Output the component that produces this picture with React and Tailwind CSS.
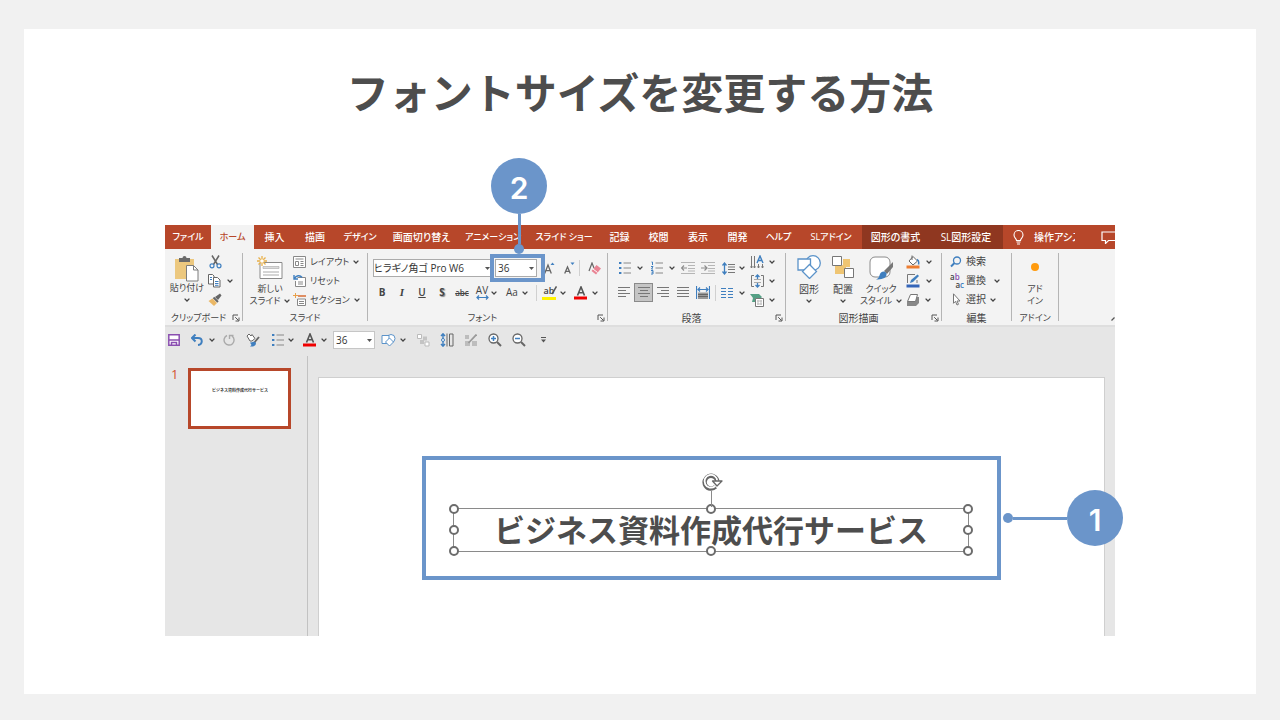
import React, { useState } from 'react';
import clsx from 'clsx';

const TABS = [
    { label: 'ファイル', width: 'w-[46px]', text: 'text-[9px]' },
    { label: 'ホーム', width: 'w-[43px]', text: 'text-[9px]' },
    { label: '挿入', width: 'w-[41px]', text: 'text-[10px]' },
    { label: '描画', width: 'w-[40px]', text: 'text-[10px]' },
    { label: 'デザイン', width: 'w-[50px]', text: 'text-[9px]' },
    { label: '画面切り替え', width: 'w-[73px]', text: 'text-[10px]' },
    { label: 'アニメーション', width: 'w-[70px]', text: 'text-[9px]' },
    { label: 'スライド ショー', width: 'w-[72px]', text: 'text-[9px]' },
    { label: '記録', width: 'w-[39px]', text: 'text-[10px]' },
    { label: '校閲', width: 'w-[39px]', text: 'text-[10px]' },
    { label: '表示', width: 'w-[40px]', text: 'text-[10px]' },
    { label: '開発', width: 'w-[39px]', text: 'text-[10px]' },
    { label: 'ヘルプ', width: 'w-[43px]', text: 'text-[9px]' },
    { label: 'SLアドイン', width: 'w-[62px]', text: 'text-[9px]' },
    { label: '図形の書式', width: 'w-[67px]', text: 'text-[10px]', context: true },
    { label: 'SL図形設定', width: 'w-[74px]', text: 'text-[10px]', context: true },
];

const BLUE = '#3f7fbf';
const GRAY = '#666666';

function Icon({ w = 14, h = 14, children, label }) {
    return (
        <svg width={w} height={h} viewBox={`0 0 ${w} ${h}`} fill="none" className="shrink-0" aria-label={label}>
            {children}
        </svg>
    );
}

function Chevron() {
    return (
        <Icon w={6} h={4}>
            <path d="M.6.6 3 3 5.4.6" stroke="#444" strokeWidth="1.3" />
        </Icon>
    );
}

function Triangle() {
    return (
        <Icon w={5} h={3}>
            <path d="M0 0h5L2.5 3z" fill="#555" />
        </Icon>
    );
}

function Tool({ label, className, children }) {
    return (
        <button type="button" aria-label={label} className={clsx('flex h-[19px] shrink-0 items-center justify-center', className)}>
            {children}
        </button>
    );
}

function Divider() {
    return <div className="h-4 w-px shrink-0 bg-[#d0d0d0]" />;
}

function Group({ label, className, labelSize = 'text-[10px]', launcher, children }) {
    return (
        <section className={clsx('flex shrink-0 pt-[3px]', className)}>
            <div className="flex min-w-0 flex-1 flex-col pb-px">
                <div className="flex flex-1">{children}</div>
                <div className="flex h-3 items-center">
                    <span className={clsx('flex-1 whitespace-nowrap text-center', labelSize)}>{label}</span>
                    {launcher && (
                        <button type="button" aria-label={`${label}の詳細`} className="mr-0.5 flex w-2">
                            <Icon w={8} h={8}>
                                <path d="M1 6V1h5M3.2 3.2 6.5 6.5M7 3.5V7H3.5" stroke="#555" />
                            </Icon>
                        </button>
                    )}
                </div>
            </div>
            <div className="mb-1 mt-px w-px bg-[#b5b5b5]" />
        </section>
    );
}

function BulletsIcon() {
    return (
        <Icon w={12} h={14}>
            <path d="M0 2h2.4M0 7h2.4M0 12h2.4" stroke={BLUE} strokeWidth="2.2" />
            <path d="M4.5 2H12M4.5 7H12M4.5 12H12" stroke="#888" />
        </Icon>
    );
}

function NumbersIcon() {
    return (
        <Icon w={12} h={14}>
            <path d="M.5 1h1v3M0 5.5h2L.5 8H2M0 9.5h2v3.5H0M.5 11.2H2" stroke={BLUE} />
            <path d="M4.5 2H12M4.5 7H12M4.5 12H12" stroke="#888" />
        </Icon>
    );
}

function LinesIcon({ d }) {
    return (
        <Icon w={12} h={11}>
            <path d={d} stroke="#777" />
        </Icon>
    );
}

function IndentIcon({ flip }) {
    return (
        <Icon w={14} h={12}>
            <path d="M0 .5h14M7 3.5h7M7 6.5h7M0 11.5h14M7 9h7" stroke="#b5b5b5" />
            <path d={flip ? 'M0 6h5.5M3.5 3.5 6 6 3.5 8.5' : 'M.5 6H6M3 3.5.5 6 3 8.5'} stroke="#8d8d8d" strokeWidth="1.2" />
        </Icon>
    );
}

function FontColorIcon() {
    return (
        <Icon w={14} h={14}>
            <path d="M3.5 9.5 7 1l3.5 8.5M4.8 6.8h4.4" stroke="#555" strokeWidth="1.6" />
            <rect y="10.5" width="13" height="3" fill="#f00000" />
        </Icon>
    );
}

function ShapesIcon({ size = 24 }) {
    return (
        <svg width={size} height={size} viewBox="0 0 24 24" fill="#fff" stroke="#5b93c9" strokeWidth="1.3" className="shrink-0">
            <circle cx="16" cy="8" r="7.3" />
            <path d="M1 4h12.500v11H1z" />
            <path d="m12.500 9.500 7 7-7 7-7-7z" />
        </svg>
    );
}

function QuickBrushIcon() {
    return (
        <Icon w={26} h={26}>
            <rect x="2" y="2" width="20" height="20" rx="5" fill="#fff" stroke="#8a8a8a" />
            <path d="M25 7v5l-6 7-3-3z" fill="#777" />
            <path d="M15.500 16.500c2 0 3.500 1.500 3 3.500-.8 3.500-5 4.500-10.500 4.500 3-1 3-3 4-5.500.6-1.500 2-2.500 3.500-2.500z" fill={BLUE} />
        </Icon>
    );
}

function Badge({ children }) {
    return (
        <span className="flex size-14 shrink-0 items-center justify-center rounded-full bg-[#6b95ca] pt-1 font-['Inter',sans-serif] text-[30px] font-semibold leading-none text-white">
            {children}
        </span>
    );
}

function TabBar({ active, onSelect }) {
    return (
        <nav className="flex h-6 overflow-hidden bg-[#b7472a] text-white">
            {TABS.map((tab) => (
                <button
                    key={tab.label}
                    type="button"
                    onClick={() => onSelect(tab.label)}
                    className={clsx(
                        'shrink-0 whitespace-nowrap text-center font-medium',
                        tab.width,
                        tab.text,
                        tab.context && 'bg-[#8f3720]',
                        active === tab.label && 'bg-[#f3f3f3] text-[#b7472a]'
                    )}
                >
                    {tab.label}
                </button>
            ))}
            <button type="button" className="ml-2.5 flex w-[62px] shrink-0 items-center gap-2.5 overflow-hidden whitespace-nowrap text-[10px] font-medium">
                <Icon w={11} h={15}>
                    <path d="M3.500 10.500C3.500 8.500 1 8 1 5a4.500 4.500 0 0 1 9 0c0 3-2.500 3.500-2.500 5.500zM3.500 12h4M4 14h3" stroke="#fff" strokeWidth="1.100" />
                </Icon>
                操作アシスト
            </button>
            <button type="button" aria-label="コメント" className="-mr-1 ml-auto flex shrink-0 items-center">
                <Icon w={18} h={13}>
                    <path d="M1 1h16v8.500H7.500L4.500 12.500V9.500H1z" stroke="#fff" strokeWidth="1.200" />
                </Icon>
            </button>
        </nav>
    );
}

function ClipboardGroup() {
    return (
        <Group label="クリップボード" labelSize="text-[9px]" launcher className="w-[78px]">
            <button type="button" className="ml-1 flex w-9 flex-col items-center pt-[3px]">
                <Icon w={26} h={27}>
                    <path d="M1 4h19v20H1z" fill="#ecc87f" />
                    <path d="M5 3h3.500a2 2 0 0 1 4 0H16v4H5z" fill="#6a6a6a" />
                    <path d="M12.500 10.500h7l4.500 4.500v11H12.500z" fill="#fff" stroke="#7d7d7d" />
                    <path d="M19.500 10.500V15H24" stroke="#7d7d7d" />
                </Icon>
                <span className="whitespace-nowrap text-[9px] leading-3">貼り付け</span>
                <span className="pt-1"><Chevron /></span>
            </button>
            <div className="ml-0.5 flex flex-col items-start">
                <Tool label="切り取り" className="w-4">
                    <Icon w={13} h={14}>
                        <path d="m3 .5 5.500 9M10 .5 4.500 9.500" stroke="#666" strokeWidth="1.500" />
                        <circle cx="3" cy="10.800" r="2" stroke={BLUE} strokeWidth="1.200" />
                        <circle cx="10" cy="10.800" r="2" stroke={BLUE} strokeWidth="1.200" />
                    </Icon>
                </Tool>
                <Tool label="コピー" className="gap-1.5">
                    <Icon>
                        <path d="M1.500.5h4L7 2v8H1.500z" fill="#fff" stroke="#666" />
                        <path d="M6.500 3.500h4L13 6v7H6.500z" fill="#fff" stroke="#666" />
                        <path d="M8 7.500h3.500M8 9.500h3.500M8 11.300h3.500M3 3.500h2M3 5.500h2" stroke={BLUE} />
                    </Icon>
                    <Chevron />
                </Tool>
                <Tool label="書式のコピー" className="w-4">
                    <Icon>
                        <path d="m7 4 5-3.500 1.500 2L10 7z" fill="#666" />
                        <path d="m5.500 4.500 4.500 4.500" stroke="#666" strokeWidth="2" />
                        <path d="m4.500 5.500 4.500 4.500-3 3L.5 8z" fill="#eab765" />
                    </Icon>
                </Tool>
            </div>
        </Group>
    );
}

function SlidesGroup() {
    return (
        <Group label="スライド" labelSize="text-[9px]" className="w-[125px]">
            <button type="button" className="ml-1.5 flex w-[42px] flex-col items-center pt-1">
                <Icon w={26} h={27}>
                    <path d="M3 6.500h22v16H3z" fill="#fff" stroke="#8a8a8a" />
                    <path d="M6 10.500h16v2H6z" fill="#ddd" stroke="#aaa" strokeWidth=".6" />
                    <path d="M6 16h16M6 19h16" stroke="#aaa" />
                    <path d="M5 0v10M0 5h10M1.500 1.500l7 7M8.500 1.500l-7 7" stroke="#e8b04a" strokeWidth="1.300" />
                    <circle cx="5" cy="5" r="1.800" fill="#fff" />
                </Icon>
                <span className="whitespace-nowrap text-[9px] leading-3">新しい</span>
                <span className="flex items-center gap-1 whitespace-nowrap text-[9px] leading-3">
                    スライド <Chevron />
                </span>
            </button>
            <div className="ml-0.5 flex flex-col items-start text-[9px]">
                <Tool className="gap-1 whitespace-nowrap">
                    <Icon w={13} h={12}>
                        <path d="M.5.5h12v11H.5z" fill="#fff" stroke="#888" />
                        <path d="M2.500 3h8M2.500 5.500h3v4h-3zM7.500 5.500h3M7.500 7.500h3M7.500 9.500h3" stroke="#888" />
                    </Icon>
                    レイアウト <Chevron />
                </Tool>
                <Tool className="gap-1 whitespace-nowrap">
                    <Icon w={13} h={13}>
                        <path d="M4.500 3.500h8v9h-10V7" fill="#fff" stroke="#888" />
                        <path d="M5 8h5M5 10h5" stroke="#888" />
                        <path d="M1 1v4h4M1.500 4.500C3 1.500 7 .5 9 3.500" stroke={BLUE} strokeWidth="1.400" />
                    </Icon>
                    リセット
                </Tool>
                <Tool className="gap-1 whitespace-nowrap">
                    <Icon w={13} h={13}>
                        <path d="M4.500 6h8v6.500h-8z" fill="#fff" stroke="#888" />
                        <path d="M6 8.500h5M6 10.500h5" stroke="#888" />
                        <path d="M5 3h8" stroke="#d8743f" strokeWidth="1.600" />
                        <path d="M2.500 0v5M0 2.500h5" stroke="#e8a04a" />
                    </Icon>
                    セクション <Chevron />
                </Tool>
            </div>
        </Group>
    );
}

function FontGroup({ size, onSize }) {
    return (
        <Group label="フォント" labelSize="text-[9px]" launcher className="w-[240px]">
            <div className="flex flex-1 flex-col gap-1.5 pl-1 pt-[7px]">
                <div className="flex h-[18px] items-center pl-px">
                    <label className="flex h-[18px] w-[118px] items-center border border-[#ababab] bg-white">
                        <select aria-label="フォント名" className="h-full min-w-0 flex-1 appearance-none text-[10px] text-[#333]">
                            <option>ヒラギノ角ゴ Pro W6</option>
                        </select>
                        <Triangle />
                    </label>
                    <div className="relative ml-1 mr-0.5">
                        <label className="flex h-[18px] w-[42px] items-center border border-[#ababab] bg-white pl-0.5 pr-0.5">
                            <select
                                aria-label="フォントサイズ"
                                value={size}
                                onChange={(e) => onSize(e.target.value)}
                                className="h-full min-w-0 flex-1 appearance-none text-[10px] text-[#333]"
                            >
                                <option>28</option>
                                <option>36</option>
                                <option>44</option>
                            </select>
                            <Triangle />
                        </label>
                        <div className="pointer-events-none absolute -inset-y-[5px] -left-[5px] -right-2 z-10 border-4 border-[#6b95ca]" />
                        <div className="pointer-events-none absolute bottom-full left-1/2 z-20 mb-[5px] ml-[3px] flex -translate-x-1/2 flex-col items-center">
                            <Badge>2</Badge>
                            <span className="h-[30px] w-[3px] bg-[#6b95ca]" />
                            <span className="size-2.5 rounded-full bg-[#6b95ca]" />
                        </div>
                    </div>
                    <Tool label="フォントサイズの拡大" className="w-5">
                        <Icon w={11} h={13}>
                            <path d="M.7 11.500 4 3l3.300 8.500M1.800 8.700h4.400" stroke={GRAY} strokeWidth="1.300" />
                            <path d="M6.500 3 8.500.5l2 2.500z" fill={BLUE} />
                        </Icon>
                    </Tool>
                    <Tool label="フォントサイズの縮小" className="w-5">
                        <Icon w={11} h={13}>
                            <path d="M.7 11.500 3.500 5l2.800 6.500M1.700 9.300h3.600" stroke={GRAY} strokeWidth="1.300" />
                            <path d="M6.500.5 8.500 3l2-2.500z" fill={BLUE} />
                        </Icon>
                    </Tool>
                    <Divider />
                    <Tool label="書式のクリア" className="ml-1 w-5">
                        <Icon w={13} h={13}>
                            <path d="M1 9 4 1l2 5" stroke={GRAY} strokeWidth="1.200" />
                            <path d="m3.500 9 5-6 4.500 3.500-5 6z" fill="#e98494" />
                            <path d="m5 7 4.500 3.500" stroke="#fff" />
                        </Icon>
                    </Tool>
                </div>
                <div className="flex items-center text-[10px]">
                    <Tool label="太字" className="w-5"><b>B</b></Tool>
                    <Tool label="斜体" className="w-5 font-['Liberation_Serif',serif] text-[11px] font-bold italic">I</Tool>
                    <Tool label="下線" className="w-5 font-semibold underline">U</Tool>
                    <Tool label="文字の影" className="w-5"><b className="[text-shadow:1px_1px_1px_#888]">S</b></Tool>
                    <Tool label="取り消し線" className="w-5 text-[8px] font-semibold line-through">abc</Tool>
                    <Tool label="文字の間隔" className="w-[28px] gap-0.5">
                        <span className="flex flex-col items-center text-[10px] leading-[9px]">
                            AV
                            <Icon w={13} h={5}>
                                <path d="M1 2.500h11M3 .5l-2 2 2 2M10 .5l2 2-2 2" stroke={BLUE} strokeWidth="1.200" />
                            </Icon>
                        </span>
                        <Chevron />
                    </Tool>
                    <Tool label="文字種の変換" className="ml-0.5 w-[30px] gap-1">Aa <Chevron /></Tool>
                    <div className="ml-1"><Divider /></div>
                    <Tool label="蛍光ペンの色" className="ml-0.5 w-[30px] gap-1">
                        <span className="relative flex h-3.5 w-3.5 flex-col items-center border-b-[3px] border-[#fff200] text-[9px] font-semibold leading-[10px]">
                            ab
                            <svg width="8" height="9" viewBox="0 0 8 9" className="absolute -right-px top-0">
                                <path d="M7.500.5 3 8" stroke="#555" strokeWidth="1.500" />
                            </svg>
                        </span>
                        <Chevron />
                    </Tool>
                    <Tool label="フォントの色" className="ml-0.5 w-[30px] gap-1"><FontColorIcon /> <Chevron /></Tool>
                </div>
            </div>
        </Group>
    );
}

function ParagraphGroup() {
    return (
        <Group label="段落" launcher className="w-[178px]">
            <div className="flex w-[142px] flex-col gap-1.5 pl-2 pt-[7px]">
                <div className="flex h-[18px] items-center">
                    <Tool label="箇条書き" className="w-[30px] gap-1.5"><BulletsIcon /> <Chevron /></Tool>
                    <Tool label="段落番号" className="ml-0.5 w-[30px] gap-1.5"><NumbersIcon /> <Chevron /></Tool>
                    <Tool label="インデントを減らす" className="w-5"><IndentIcon /></Tool>
                    <Tool label="インデントを増やす" className="w-5"><IndentIcon flip /></Tool>
                    <Tool label="行間" className="w-[30px] gap-1">
                        <Icon w={13} h={13}>
                            <path d="M2.500 1v11M.5 3.500 2.500 1l2 2.500M.5 9.500l2 2.500 2-2.500" stroke={BLUE} strokeWidth="1.300" />
                            <path d="M6 2.500h7M6 5h7M6 7.500h7M6 10.500h7" stroke="#777" />
                        </Icon>
                        <Chevron />
                    </Tool>
                </div>
                <div className="-ml-0.5 flex items-center">
                    <Tool label="左揃え" className="w-5"><LinesIcon d="M0 .5h12M0 3.500h8M0 6.500h12M0 9.500h8" /></Tool>
                    <Tool label="中央揃え" className="w-[19px] border border-[#8a8a8a] bg-[#c5c5c5]"><LinesIcon d="M0 .5h12M2 3.500h8M0 6.500h12M2 9.500h8" /></Tool>
                    <Tool label="右揃え" className="w-5"><LinesIcon d="M0 .5h12M4 3.500h8M0 6.500h12M4 9.500h8" /></Tool>
                    <Tool label="両端揃え" className="w-5"><LinesIcon d="M0 .5h12M0 3.500h12M0 6.500h12M0 9.500h12" /></Tool>
                    <Tool label="均等割り付け" className="w-5">
                        <Icon w={14} h={14}>
                            <path d="M.5 0v13M13.500 0v13M2 3.500h10M4 1.500l-2 2 2 2M10 1.500l2 2-2 2" stroke={BLUE} strokeWidth="1.200" />
                            <path d="M2 6.500h10V13H2z" fill="#999" />
                            <path d="M2 8.500h10M2 10.500h10" stroke="#666" />
                        </Icon>
                    </Tool>
                    <div className="ml-0.5"><Divider /></div>
                    <Tool label="段の追加" className="ml-1 w-[26px] gap-1.5">
                        <Icon w={12} h={10}>
                            <path d="M0 .5h5M0 3.500h5M0 6.500h5M0 9.500h5M7 .5h5M7 3.500h5M7 6.500h5M7 9.500h5" stroke={BLUE} />
                        </Icon>
                        <Chevron />
                    </Tool>
                </div>
            </div>
            <div className="flex flex-col items-start">
                <Tool label="文字列の方向" className="gap-1">
                    <Icon w={15} h={14}>
                        <path d="M1.500 1v12M4.500 1v12M8.500 9v4M12.500 9v4" stroke="#777" />
                        <path d="m7 8 3-7 3 7M8 5.500h4" stroke={BLUE} strokeWidth="1.400" />
                        <path d="m.5 11.500 1 1.500 1-1.500M3.500 11.500l1 1.500 1-1.500M7.500 11.500l1 1.500 1-1.500M11.500 11.500l1 1.500 1-1.500" stroke="#777" />
                    </Icon>
                    <Chevron />
                </Tool>
                <Tool label="文字の配置" className="gap-1">
                    <Icon w={15} h={14}>
                        <path d="M4 1.500H1.500v11H4M11 1.500h2.500v11H11" stroke="#777" />
                        <path d="M4 5.500h7M4 8.500h7" stroke="#aaa" />
                        <path d="M7.500 1v4M5.500 3l2-2 2 2M7.500 13V9M5.500 11l2 2 2-2" stroke={BLUE} strokeWidth="1.300" />
                    </Icon>
                    <Chevron />
                </Tool>
                <Tool label="SmartArt に変換" className="gap-1">
                    <Icon w={15} h={14}>
                        <path d="M0 1h9l3 3-2 2H5v3H2l1-4z" fill="#55a085" />
                        <path d="M5.500 5.500h8v8h-8z" fill="#fff" stroke="#777" />
                        <path d="M7 8h5M7 11h5M8 7v5M11 7v5" stroke="#bbb" />
                    </Icon>
                    <Chevron />
                </Tool>
            </div>
        </Group>
    );
}

function DrawingGroup() {
    return (
        <Group label="図形描画" launcher className="w-[156px]">
            <button type="button" className="ml-2 flex w-[30px] flex-col items-center pt-[3px]">
                <ShapesIcon />
                <span className="pt-1 text-[10px] leading-3">図形</span>
                <span className="pt-1"><Chevron /></span>
            </button>
            <button type="button" className="ml-1 flex w-[30px] flex-col items-center pt-[3px]">
                <Icon w={24} h={24}>
                    <path d="M4 10h11v9H4zM12 4h7v8h-7z" fill="#efc573" />
                    <path d="M1.500 1.500h9v9h-9zM13.500 13.500h9v9h-9z" fill="#fff" stroke="#777" />
                </Icon>
                <span className="pt-1 text-[10px] leading-3">配置</span>
                <span className="pt-1"><Chevron /></span>
            </button>
            <button type="button" className="ml-0.5 flex w-[42px] flex-col items-center pt-[3px] text-[9px]">
                <QuickBrushIcon />
                <span className="pt-0.5 leading-3">クイック</span>
                <span className="flex items-center gap-1 whitespace-nowrap leading-3">スタイル <Chevron /></span>
            </button>
            <div className="ml-1 flex flex-col items-start">
                <Tool label="図形の塗りつぶし" className="gap-1.5">
                    <Icon>
                        <path d="m7 1.500 4.500 4.500L7 10 3 6z" fill="#fff" stroke="#666" />
                        <path d="M6 5V.5" stroke="#666" />
                        <path d="M11 4.500c2 1 2 3 1.500 5" stroke={BLUE} strokeWidth="1.500" />
                        <path d="M.5 10.500h13v3H.5z" fill="#ed7d31" />
                    </Icon>
                    <Chevron />
                </Tool>
                <Tool label="図形の枠線" className="gap-1.5">
                    <Icon>
                        <path d="M9 .5H1.500V9M11 6v3" stroke="#777" />
                        <path d="m4 9 1-3 6.500-5.500L13 2 7 8z" fill={BLUE} />
                        <path d="M.5 10.500h13v3H.5z" fill="#3465b8" />
                    </Icon>
                    <Chevron />
                </Tool>
                <Tool label="図形の効果" className="gap-1.5">
                    <Icon w={13} h={12}>
                        <path d="M4 3h9v6l-3 3H1V8z" fill="#888" />
                        <path d="M4.500.5h7l-2 7h-8z" fill="#fff" stroke="#777" strokeLinejoin="round" />
                    </Icon>
                    <Chevron />
                </Tool>
            </div>
        </Group>
    );
}

function EditingGroup() {
    return (
        <Group label="編集" className="w-[70px]">
            <div className="ml-2 flex flex-col items-start text-[10px]">
                <Tool className="gap-1">
                    <Icon w={12} h={12}>
                        <circle cx="7" cy="4.500" r="3.500" stroke={BLUE} strokeWidth="1.300" />
                        <path d="M4.500 7 1 10.500" stroke={BLUE} strokeWidth="2" />
                    </Icon>
                    検索
                </Tool>
                <Tool className="gap-0.5 whitespace-nowrap">
                    <span className="flex w-3.5 flex-col text-[8px] font-semibold leading-[8px]">
                        <span className="text-left">a<span className="text-[#8a4fb0]">b</span></span>
                        <span className="text-right">a<span className="text-[#3f7fbf]">c</span></span>
                    </span>
                    置換
                    <span className="pl-1.5"><Chevron /></span>
                </Tool>
                <Tool className="gap-1 whitespace-nowrap">
                    <Icon w={12} h={13}>
                        <path d="M3.500.8v9.500l2-2 1.500 3.700 1.500-.7L7 8h3z" fill="#fff" stroke="#777" />
                    </Icon>
                    選択 <Chevron />
                </Tool>
            </div>
        </Group>
    );
}

function AddinGroup() {
    return (
        <Group label="アドイン" labelSize="text-[9px]" className="w-[47px]">
            <button type="button" className="flex flex-1 flex-col items-center pt-[11px] text-[9px] leading-3">
                <span className="mb-3 size-2 rounded-full bg-[#ff9a0d]" />
                <span>アド</span>
                <span>イン</span>
            </button>
        </Group>
    );
}

function QuickAccess({ size, onSize }) {
    return (
        <div className="flex h-[31px] items-center border-t-2 border-[#dedede] pb-[3px]">
            <Tool label="上書き保存" className="w-[18px]">
                <Icon w={12} h={12}>
                    <path d="M.8.8h10.400v10.400H.8z" fill="#fff" stroke="#8a4fb0" strokeWidth="1.500" />
                    <path d="M1 6h10M3.500 11V8.500h5V11" stroke="#8a4fb0" strokeWidth="1.500" />
                </Icon>
            </Tool>
            <Tool label="元に戻す" className="ml-1.5 w-[28px] gap-1.5">
                <Icon w={12} h={12}>
                    <path d="M4.500.5 1 4l3.500 3.500M1.500 4H7c5 0 5 6.500 0 7" stroke={BLUE} strokeWidth="2" />
                </Icon>
                <Chevron />
            </Tool>
            <Tool label="やり直し" className="ml-1 w-4">
                <Icon w={12} h={12}>
                    <path d="M4 1.500a5 5 0 1 0 5 .5M6.500 5V1.500h4" stroke="#aaa" strokeWidth="1.400" />
                </Icon>
            </Tool>
            <Tool label="書式の貼り付け" className="ml-2 w-4">
                <Icon w={14} h={14}>
                    <path d="m1 3 2-2 2 2 1-1.500 3 4L6 8 4 8z" fill="#fff" stroke="#666" />
                    <path d="m13 4-5 6" stroke="#666" strokeWidth="1.800" />
                    <path d="M4 9.500c2 0 3-1.500 5-.5s.5 4-2 4.500H4l1.500-1.500z" fill={BLUE} />
                </Icon>
            </Tool>
            <Tool label="箇条書き" className="ml-2 w-[28px] gap-1"><BulletsIcon /> <Chevron /></Tool>
            <Tool label="フォントの色" className="ml-1 w-[28px] gap-1"><FontColorIcon /> <Chevron /></Tool>
            <label className="ml-1 flex h-[18px] w-[42px] items-center border border-[#c6c6c6] bg-white pl-0.5 pr-0.5">
                <select
                    aria-label="サイズ"
                    value={size}
                    onChange={(e) => onSize(e.target.value)}
                    className="h-full min-w-0 flex-1 appearance-none text-[10px] text-[#333]"
                >
                    <option>28</option>
                    <option>36</option>
                    <option>44</option>
                </select>
                <Triangle />
            </label>
            <Tool label="図形" className="ml-1 w-[28px] gap-1">
                <Icon w={15} h={14}>
                    <circle cx="10" cy="5.500" r="4" fill="#fff" stroke="#5b93c9" />
                    <path d="M1 2.500h7v8H1z" fill="#fff" stroke="#5b93c9" />
                    <path d="m8.500 5 4 4-4 4-4-4z" fill="#fff" stroke="#5b93c9" />
                </Icon>
                <Chevron />
            </Tool>
            <Tool label="グループ化" className="ml-2 w-4">
                <Icon w={13} h={13}>
                    <path d="M.5.500h4v4h-4zM8 8h4v4H8z" fill="#fff" stroke="#bbb" />
                    <path d="M6 2.500h4v4H6zM3 6h4v4H3z" fill="#c4c4c4" />
                </Icon>
            </Tool>
            <Tool label="間隔を揃える" className="ml-2 w-4">
                <Icon w={14} h={14}>
                    <path d="M3 .8v12.400M1 3 3 .8 5 3M1 11l2 2.200L5 11" stroke={BLUE} strokeWidth="1.400" />
                    <circle cx="3" cy="7" r="1.500" fill="#fff" stroke={BLUE} />
                    <path d="M7 .5v13M9.500 1h3.500v12H9.500z" stroke="#666" />
                </Icon>
            </Tool>
            <Tool label="図形の編集" className="ml-2 w-4">
                <Icon w={12} h={12}>
                    <path d="M0 1h4v4H0zM0 7h5v5H0zM7 7h5v5H7z" fill="#bdbdbd" />
                    <path d="M11.500.5 3.500 9" stroke="#999" strokeWidth="1.800" />
                </Icon>
            </Tool>
            <Tool label="拡大" className="ml-2 w-4">
                <Icon w={14} h={14}>
                    <circle cx="5.500" cy="5.500" r="4.500" fill="#fff" stroke={GRAY} strokeWidth="1.300" />
                    <path d="m9 9 4 4" stroke={GRAY} strokeWidth="2" />
                    <path d="M3 5.500h5M5.500 3v5" stroke={BLUE} strokeWidth="1.500" />
                </Icon>
            </Tool>
            <Tool label="縮小" className="ml-2 w-4">
                <Icon w={14} h={14}>
                    <circle cx="5.500" cy="5.500" r="4.500" fill="#fff" stroke={GRAY} strokeWidth="1.300" />
                    <path d="m9 9 4 4" stroke={GRAY} strokeWidth="2" />
                    <path d="M3 5.500h5" stroke={BLUE} strokeWidth="1.500" />
                </Icon>
            </Tool>
            <Tool label="ツールバーのカスタマイズ" className="ml-2 w-4">
                <Icon w={5} h={6}>
                    <path d="M0 .5h5" stroke="#555" />
                    <path d="M0 2.500h5L2.500 5.500z" fill="#555" />
                </Icon>
            </Tool>
        </div>
    );
}

const HANDLES = [
    'left-0 top-0',
    'left-1/2 top-0',
    'left-full top-0',
    'left-0 top-1/2',
    'left-full top-1/2',
    'left-0 top-full',
    'left-1/2 top-full',
    'left-full top-full',
];

function Slide() {
    return (
        <div className="flex-1 border-l border-r border-t border-[#cfcfcf] bg-white">
            <div className="relative mx-[103px] mt-[78px] border-4 border-[#6b95ca] pb-6 pl-[27px] pr-7 pt-12">
                <div className="relative flex h-11 items-center justify-center border border-[#8a8a8a]">
                    <p className="whitespace-nowrap text-[31px] font-bold leading-none text-[#4d4d4d]">ビジネス資料作成代行サービス</p>
                    {HANDLES.map((pos) => (
                        <span key={pos} className={clsx('absolute size-2.5 -translate-x-1/2 -translate-y-1/2 rounded-full border-2 border-[#6c6c6c] bg-white', pos)} />
                    ))}
                    <div className="absolute bottom-full left-1/2 mb-0.5 flex -translate-x-1/2 flex-col items-center">
                        <svg width="24" height="18" viewBox="0 0 24 18" fill="none" stroke="#666">
                            <path d="M16.500 13.800A6.400 6.400 0 1 1 18.300 8" strokeWidth="4.400" />
                            <path d="M16 13.200A6.400 6.400 0 1 1 18.300 8" stroke="#fff" strokeWidth="1.800" />
                            <path d="M13.500 8h9.500l-5 5z" fill="#fff" strokeWidth="1.300" strokeLinejoin="round" />
                        </svg>
                        <span className="h-4 w-px bg-[#8a8a8a]" />
                    </div>
                </div>
                <div className="absolute left-full top-1/2 z-10 ml-1.5 flex -translate-y-1/2 items-center">
                    <span className="size-2.5 rounded-full bg-[#6b95ca]" />
                    <span className="h-[3px] w-[54px] bg-[#6b95ca]" />
                    <Badge>1</Badge>
                </div>
            </div>
        </div>
    );
}

function App() {
    const [activeTab, setActiveTab] = useState('ホーム');
    const [size, setSize] = useState('36');

    return (
        <div className="flex min-h-screen flex-col bg-[#f1f1f1] px-6 pb-[26px] pt-[29px] font-['Open_Sans','Noto_Sans_CJK_JP',sans-serif]">
            <main className="flex flex-1 flex-col bg-white px-[141px] pb-[58px] pt-9">
                <h1 className="whitespace-nowrap text-center text-[42px] font-bold leading-14 text-[#4d4d4d]">フォントサイズを変更する方法</h1>

                <div className="mt-[104px] flex flex-1 flex-col bg-[#e6e6e6] text-[#444]">
                    <div className="[font-feature-settings:'palt']">
                        <TabBar active={activeTab} onSelect={setActiveTab} />
                        <div className="flex h-[76px] bg-[#f3f3f3]">
                            <ClipboardGroup />
                            <SlidesGroup />
                            <FontGroup size={size} onSize={setSize} />
                            <ParagraphGroup />
                            <DrawingGroup />
                            <EditingGroup />
                            <AddinGroup />
                            <button type="button" aria-label="リボンを折りたたむ" className="ml-auto self-end pb-1">
                                <Icon w={4} h={4}>
                                    <path d="m.5 3.500 3-3" stroke="#555" strokeWidth="1.300" />
                                </Icon>
                            </button>
                        </div>
                        <QuickAccess size={size} onSize={setSize} />
                    </div>

                    <div className="flex flex-1">
                        <aside className="flex w-[143px] shrink-0 items-start gap-2.5 border-r border-[#c2c2c2] pl-1.5 pt-3">
                            <span className="text-[13px] leading-3 text-[#d35230]">1</span>
                            <div className="flex h-[61px] w-[103px] justify-center border-[3px] border-[#b7472a] bg-white pt-[17px]">
                                <span className="whitespace-nowrap text-[4px] font-bold leading-[6px] text-[#333]">ビジネス資料作成代行サービス</span>
                            </div>
                        </aside>
                        <div className="flex flex-1 pl-2.5 pr-[10px] pt-[21px]">
                            <Slide />
                        </div>
                    </div>
                </div>
            </main>
        </div>
    );
}

export default App;
